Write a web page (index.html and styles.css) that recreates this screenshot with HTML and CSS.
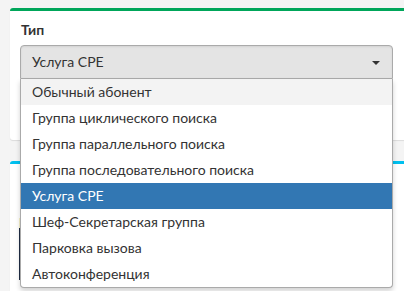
FILE: index.html
```html
<!DOCTYPE html>
<html lang="ru">
<head>
<meta charset="utf-8">
<link rel="stylesheet" href="styles.css">
</head>
<body>
<div class="page">
  <div class="card card-green">
    <div class="card-body">
      <div class="label">Тип</div>
      <div class="select-wrap">
        <div class="select">
          <span class="select-text">Услуга CPE</span>
          <span class="arrow"></span>
        </div>
        <ul class="dropdown">
          <li class="opt hover">Обычный абонент</li>
          <li class="opt">Группа циклического поиска</li>
          <li class="opt">Группа параллельного поиска</li>
          <li class="opt">Группа последовательного поиска</li>
          <li class="opt selected">Услуга CPE</li>
          <li class="opt">Шеф-Секретарская группа</li>
          <li class="opt">Парковка вызова</li>
          <li class="opt">Автоконференция</li>
        </ul>
      </div>
    </div>
  </div>
  <div class="card card-blue">
    <div class="card-body2">
      <div class="hint-yellow"></div>
      <div class="hint-dark"></div>
    </div>
  </div>
</div>
</body>
</html>
```
FILE: styles.css
```css
html, body {
  margin: 0;
  padding: 0;
  height: 100%;
  overflow: hidden;
}
body {
  background: #f4f4f4;
  font-family: "Lato", "Liberation Sans", sans-serif;
  font-size: 14px;
  color: #333;
}
.page {
  box-sizing: border-box;
  height: 291px;
  overflow: hidden;
  padding: 8px 0 0 10px;
  display: flex;
  flex-direction: column;
  gap: 21px;
}
.card {
  background: #fff;
  border-radius: 3px 0 0 3px;
  width: 394px;
  flex-shrink: 0;
  box-shadow: 0 1px 1px rgba(0, 0, 0, 0.1);
}
.card-green {
  border-top: 3px solid #00a65a;
  height: 129px;
}
.card-blue {
  border-top: 3px solid #00c0ef;
  flex: 1;
  border-radius: 3px 0 0 0;
}
.card-body {
  padding: 9px 10px 0 10px;
}
.label {
  font-weight: bold;
  line-height: 20px;
  margin-left: 1px;
  margin-bottom: 5px;
}
.select-wrap {
  position: relative;
  width: 373px;
}
.select {
  box-sizing: border-box;
  height: 34px;
  border: 1px solid #aaa;
  border-radius: 4px 4px 0 0;
  background: #e4e4e4;
  box-shadow: inset 0 1px 2px rgba(0, 0, 0, 0.08);
  display: flex;
  align-items: center;
  justify-content: space-between;
  padding: 0 12px 0 11px;
}
.select-text {
  line-height: 20px;
}
.arrow {
  width: 0;
  height: 0;
  border-left: 4px solid transparent;
  border-right: 4px solid transparent;
  border-top: 4px solid #333;
  margin-top: 1px;
}
.dropdown {
  position: absolute;
  top: 100%;
  left: 0;
  right: 0;
  margin: 0;
  padding: 0;
  list-style: none;
  background: #fff;
  border: 1px solid #aaa;
  border-top: none;
  border-radius: 0 0 4px 4px;
  box-shadow: 0 3px 5px rgba(0, 0, 0, 0.18);
  z-index: 5;
}
.opt {
  height: 26px;
  line-height: 26px;
  padding-left: 11px;
  color: #333;
}
.opt.hover {
  background: #f3f3f3;
}
.opt.selected {
  background: #3277b3;
  color: #fff;
}
.card-body2 {
  padding: 54px 0 0 9px;
}
.hint-yellow {
  width: 20px;
  height: 10px;
  background: #f6f0c8;
}
.hint-dark {
  width: 20px;
  height: 52px;
  background: #1f2d45;
}
```
